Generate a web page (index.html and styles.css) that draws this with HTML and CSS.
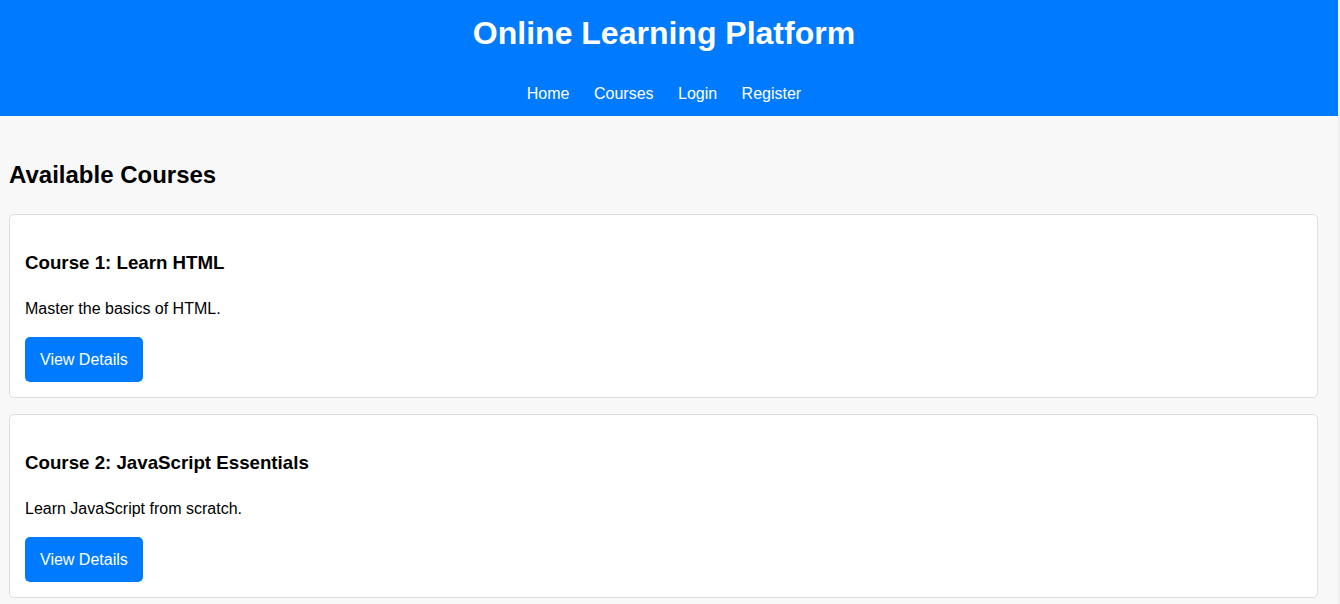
FILE: index.html
```html
<!DOCTYPE html>
<html lang="en">
<head>
<meta charset="utf-8">
<title>Online Learning Platform</title>
<link rel="stylesheet" href="styles.css">
</head>
<body>
<header class="site-header">
  <h1 class="site-title">Online Learning Platform</h1>
  <nav class="site-nav">
    <a href="#">Home</a>
    <a href="#">Courses</a>
    <a href="#">Login</a>
    <a href="#">Register</a>
  </nav>
</header>
<main class="content">
  <h2 class="section-title">Available Courses</h2>
  <div class="course-card">
    <h3 class="course-title">Course 1: Learn HTML</h3>
    <p class="course-desc">Master the basics of HTML.</p>
    <a href="#" class="btn">View Details</a>
  </div>
  <div class="course-card">
    <h3 class="course-title">Course 2: JavaScript Essentials</h3>
    <p class="course-desc">Learn JavaScript from scratch.</p>
    <a href="#" class="btn">View Details</a>
  </div>
</main>
</body>
</html>
```

FILE: styles.css
```css
* { box-sizing: border-box; }
html { background: #efefef; }
body {
  margin: 0;
  width: 1338px;
  min-height: 100vh;
  background: #f8f8f8;
  font-family: "Liberation Sans", Arial, sans-serif;
  color: #000;
}
.site-header {
  background: #007bff;
  color: #fff;
  text-align: center;
  padding: 15px 10px 13px 0;
  height: 116px;
}
.site-title {
  margin: 0 0 33px;
  font-size: 32px;
  line-height: 37px;
  font-weight: bold;
}
.site-nav {
  font-size: 16px;
  line-height: 18px;
}
.site-nav a {
  color: #fff;
  text-decoration: none;
  margin: 0 10px;
}
.content {
  padding: 0 20px 0 9px;
}
.section-title {
  margin: 0;
  padding: 45px 0 25px;
  font-size: 24px;
  line-height: 28px;
  font-weight: bold;
}
.course-card {
  background: #fff;
  border: 1px solid #ddd;
  border-radius: 5px;
  padding: 15px;
  margin-bottom: 16px;
  height: 184px;
}
.course-title {
  margin: 22px 0 0;
  font-size: 18.72px;
  line-height: 22px;
  font-weight: bold;
}
.course-desc {
  margin: 26px 0 0;
  font-size: 16px;
  line-height: 18px;
}
.btn {
  display: inline-block;
  margin-top: 19px;
  background: #007bff;
  color: #fff;
  text-decoration: none;
  font-size: 16px;
  line-height: 19px;
  padding: 13px 15px;
  border-radius: 5px;
}
```
